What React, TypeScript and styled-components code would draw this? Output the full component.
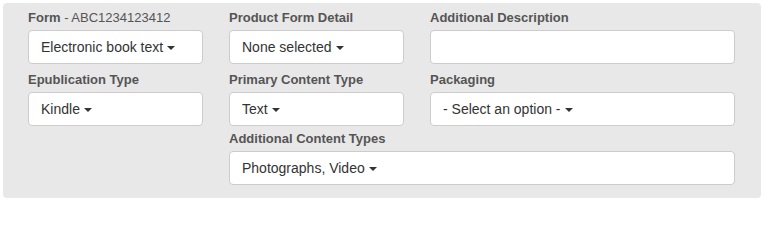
import styled, { createGlobalStyle } from "styled-components";

const GlobalStyle = createGlobalStyle`
  body {
    margin: 0;
    background: #ffffff;
    font-family: "Liberation Sans", Arial, sans-serif;
  }
`;

const Panel = styled.div`
  margin: 3px;
  width: 758px;
  box-sizing: border-box;
  padding: 6px 26px 13px 25px;
  background: #e8e8e8;
  border-radius: 4px;
`;

const Grid = styled.div`
  display: grid;
  grid-template-columns: 175px 175px 1fr;
  column-gap: 26px;
`;

const Field = styled.div<{ $span?: string; $space?: number }>`
  grid-column: ${(p) => p.$span || "auto"};
  margin-top: ${(p) => p.$space || 0}px;
  display: flex;
  flex-direction: column;
`;

const Label = styled.label`
  display: block;
  font-size: 13px;
  line-height: 18px;
  font-weight: bold;
  color: #555555;
  margin-bottom: 3px;
  white-space: nowrap;
`;

const Code = styled.span`
  font-weight: normal;
`;

const Select = styled.div`
  box-sizing: border-box;
  height: 34px;
  padding: 6px 12px;
  border: 1px solid #cccccc;
  border-radius: 4px;
  background: #ffffff;
  color: #333333;
  font-size: 14px;
  line-height: 20px;
  white-space: nowrap;
`;

const Caret = styled.span`
  display: inline-block;
  width: 0;
  height: 0;
  margin-left: 4px;
  vertical-align: middle;
  border-top: 4px solid #333333;
  border-left: 4px solid transparent;
  border-right: 4px solid transparent;
`;

interface IDropProps {
  value?: string;
}

const Drop = ({ value }: IDropProps) => (
  <Select>
    {value !== undefined && (
      <>
        {value}
        <Caret />
      </>
    )}
  </Select>
);

const App = () => {
  return (
    <>
      <GlobalStyle />
      <Panel>
        <Grid>
          <Field>
            <Label>
              Form <Code>- ABC1234123412</Code>
            </Label>
            <Drop value="Electronic book text" />
          </Field>
          <Field>
            <Label>Product Form Detail</Label>
            <Drop value="None selected" />
          </Field>
          <Field>
            <Label>Additional Description</Label>
            <Drop />
          </Field>

          <Field $space={7}>
            <Label>Epublication Type</Label>
            <Drop value="Kindle" />
          </Field>
          <Field $space={7}>
            <Label>Primary Content Type</Label>
            <Drop value="Text" />
          </Field>
          <Field $space={7}>
            <Label>Packaging</Label>
            <Drop value="- Select an option -" />
          </Field>

          <Field $span="2 / 4" $space={4}>
            <Label>Additional Content Types</Label>
            <Drop value="Photographs, Video" />
          </Field>
        </Grid>
      </Panel>
    </>
  );
};

export default App;
